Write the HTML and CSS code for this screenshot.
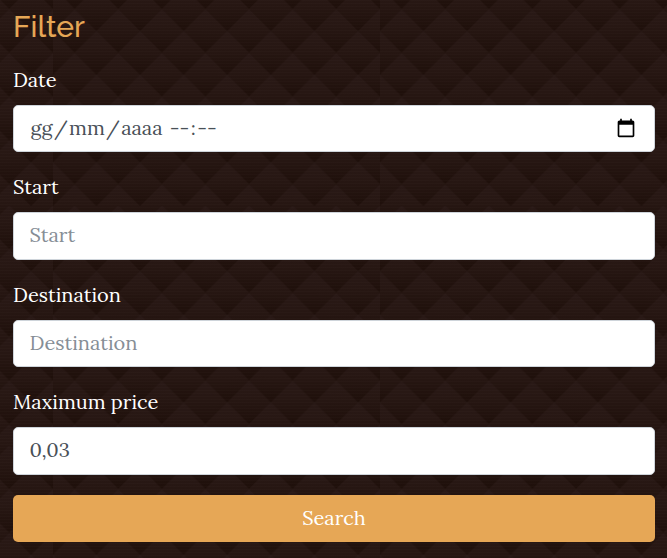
FILE: index.html
```html
<!DOCTYPE html>
<html lang="en">
<head>
<meta charset="utf-8">
<title>Filter</title>
<link rel="stylesheet" href="styles.css">
</head>
<body>
<svg class="backdrop" width="667" height="558" aria-hidden="true">
  <defs>
    <linearGradient id="facet" x1="0" y1="0" x2="0" y2="1"><stop stop-color="#291916"/><stop offset=".4" stop-color="#271713"/><stop offset="1" stop-color="#1e0f0a"/></linearGradient>
    <pattern id="diamonds" width="43.6" height="43.8" patternUnits="userSpaceOnUse" patternTransform="translate(-43.8 43)">
      <rect width="43.6" height="44" fill="#231410"/>
      <g fill="url(#facet)"><path d="M21.8 0 43.6 21.9 21.8 43.8 0 21.9Z"/><path d="M0-21.9 21.8 0 0 21.9-21.8 0Z"/><path d="M43.6-21.9 65.4 0 43.6 21.9 21.8 0Z"/><path d="M0 21.9 21.8 43.8 0 65.7-21.8 43.8Z"/><path d="M43.6 21.9 65.4 43.8 43.6 65.7 21.8 43.8Z"/></g>
    </pattern>
    <pattern id="tile" width="327" height="240" patternUnits="userSpaceOnUse" patternTransform="translate(53 -34)">
      <rect width="327" height="240" fill="url(#diamonds)"/>
    </pattern>
    <pattern id="lines" width="4" height="3" patternUnits="userSpaceOnUse"><path d="M0 .5h4" stroke="#fff" stroke-opacity=".01"/></pattern>
  </defs>
  <rect width="667" height="558" fill="url(#tile)"/>
  <rect width="667" height="558" fill="url(#lines)"/>
</svg>
<form class="filter">
  <h2 class="title">Filter</h2>
  <div class="group">
    <div class="label">Date</div>
    <div class="control date">
      <div class="datetime"><span class="field">gg</span><span class="slash">/</span><span class="field">mm</span><span class="slash">/</span><span class="field">aaaa</span><span class="space"> </span><span class="field">--</span><span class="colon">:</span><span class="field">--</span></div>
      <svg class="calendar" viewBox="0 0 24 24"><path d="M20 3h-1V1h-2v2H7V1H5v2H4c-1.100 0-2 .9-2 2v16c0 1.100.9 2 2 2h16c1.100 0 2-.9 2-2V5c0-1.100-.9-2-2-2zm0 18H4V8h16v13z"/></svg>
    </div>
  </div>
  <div class="group">
    <label class="label" for="start">Start</label>
    <input class="control" id="start" placeholder="Start">
  </div>
  <div class="group">
    <label class="label" for="destination">Destination</label>
    <input class="control" id="destination" placeholder="Destination">
  </div>
  <div class="group">
    <label class="label" for="price">Maximum price</label>
    <input class="control" id="price" value="0,03">
  </div>
  <button class="submit" type="button">Search</button>
</form>
</body>
</html>
```
FILE: styles.css
```css
* { box-sizing: border-box; }
body {
  margin: 0;
  background: #23140f;
  color: #fff;
  font: 20px/30px Lora, "Noto Serif", "Liberation Serif", serif;
  overflow: hidden;
}
.backdrop { position: absolute; inset: 0; z-index: -1; }
.filter { padding: 9px 12px 0 13px; }
.title {
  margin: 0 0 20px;
  color: #e6a756;
  font: 500 30px/36px Raleway, Lato, sans-serif;
}
.group { margin-bottom: 20px; }
.label { display: block; height: 40px; }
.control {
  display: flex;
  align-items: center;
  width: 100%;
  height: 47.4px;
  padding: 0 15.5px 2px;
  border: 1px solid #ced4da;
  border-radius: 5px;
  background: #fff;
  color: #495057;
  font: inherit;
}
.control::placeholder { color: #868e96; opacity: 1; }
#start { padding-bottom: 3px; }
.date { justify-content: space-between; }
.datetime { display: flex; white-space: pre; }
.field { padding: 0 1px; }
.slash { padding: 0 .3px; }
.colon { padding: 0 .5px; }
.calendar { width: 20px; height: 20px; margin: 0 2.5px -1px 0; fill: #000; }
.submit {
  width: 100%;
  height: 47px;
  padding: 0;
  border: 0;
  border-radius: 5px;
  background: #e6a756;
  color: #fff;
  font: inherit;
}
```
